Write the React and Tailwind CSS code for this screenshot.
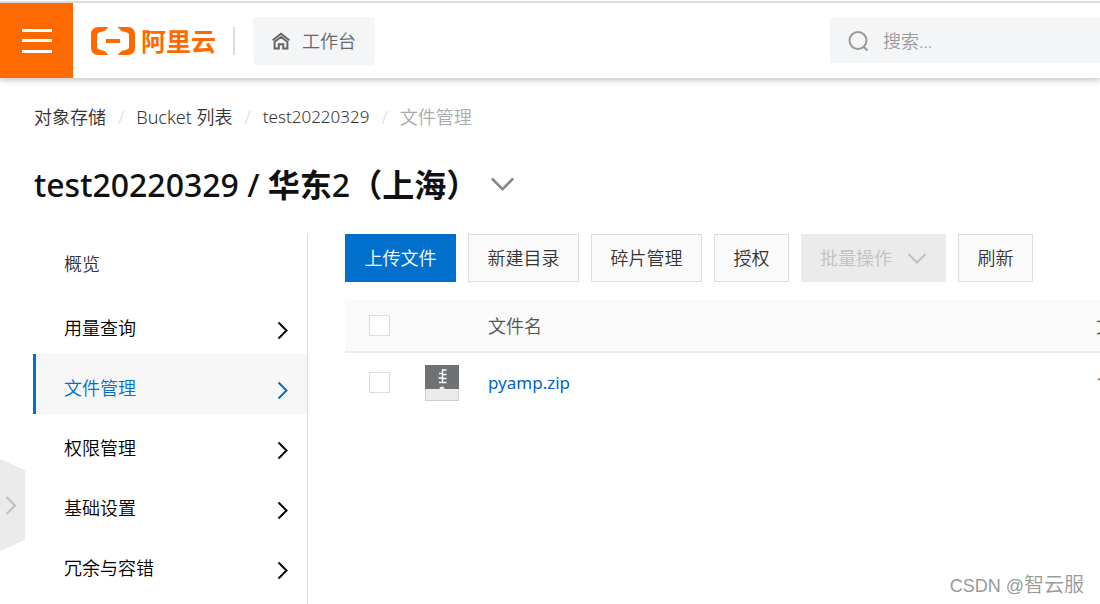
import clsx from 'clsx';

const crumbs = ['对象存储', 'Bucket 列表', 'test20220329'];

const menuItems = [
  { label: '用量查询' },
  { label: '文件管理', active: true },
  { label: '权限管理' },
  { label: '基础设置' },
  { label: '冗余与容错' },
];

const files = [{ name: 'pyamp.zip', size: '1' }];

function Chevron({ direction = 'right', className }) {
  const points = direction === 'right' ? '1.5,1.5 9.5,9.5 1.5,17.5' : '1.5,2 10,10.5 18.5,2';
  const viewBox = direction === 'right' ? '0 0 12 19' : '0 0 20 12';

  return (
    <svg viewBox={viewBox} className={className} fill="none" stroke="currentColor" strokeWidth="2" aria-hidden="true">
      <polyline points={points} />
    </svg>
  );
}

function Logo() {
  return (
    <a href="#home" className="ml-[18px] flex items-center gap-[6px] text-[#ff6a00]">
      <svg viewBox="0 0 44 28" className="h-7 w-11" fill="currentColor" aria-hidden="true">
        <path d="M17.500 0H7C3 0 0 3 0 7v14c0 4 3 7 7 7h10.500l-4-4-5.500-1.500c-1.300-.4-2-1.200-2-2.500V8c0-1.300.7-2.100 2-2.500L13.500 4z" />
        <path d="M26.500 0H37c4 0 7 3 7 7v14c0 4-3 7-7 7H26.500l4-4 5.500-1.500c1.300-.4 2-1.200 2-2.500V8c0-1.300-.7-2.100-2-2.500L30.500 4z" />
        <rect x="15" y="12" width="14" height="4" />
      </svg>
      <span className="text-[25px] leading-7 font-bold">阿里云</span>
    </a>
  );
}

function Header() {
  return (
    <header className="relative z-10 flex h-[78px] items-center border-t border-white bg-white shadow-[0_2px_6px_rgba(0,0,0,0.25)]">
      <div className="flex h-full w-full items-center border-t-2 border-[#dcdcdc]">
        <button type="button" aria-label="菜单" className="flex h-full w-[73px] shrink-0 items-center justify-center bg-[#ff6a00] text-white">
          <svg viewBox="0 0 30 24" className="h-6 w-[30px]" fill="currentColor" aria-hidden="true">
            <rect width="30" height="3" />
            <rect y="10" width="30" height="3" />
            <rect y="21" width="30" height="3" />
          </svg>
        </button>
        <Logo />
        <span className="ml-[17px] h-7 w-0.5 bg-[#dcdcdc]" />
        <button type="button" className="ml-[18px] flex h-12 shrink-0 items-center gap-3 rounded bg-[#f4f5f7] px-[19px] text-[#666]">
          <svg viewBox="0 0 18 18" className="h-[18px] w-[18px]" fill="none" stroke="currentColor" strokeWidth="2" aria-hidden="true">
            <path d="M.6 8.200L9 1.700l8.400 6.500" />
            <path d="M2.600 9.700L9 4.900l6.400 4.800v6.800h-4.200v-4.300H6.800v4.300H2.600z" />
          </svg>
          工作台
        </button>
        <label className="ml-auto flex h-[45px] w-[270px] items-center gap-[13px] bg-[#f4f5f7] pl-[18px] text-[#999]">
          <svg viewBox="0 0 22 22" className="h-[22px] w-[22px] shrink-0" fill="none" stroke="currentColor" strokeWidth="2" aria-hidden="true">
            <circle cx="10" cy="10.500" r="8.500" />
            <path d="M15.500 16.500l4 4" />
          </svg>
          <input
            type="search"
            placeholder="搜索..."
            aria-label="搜索"
            className="w-full min-w-0 bg-transparent outline-none placeholder:text-[#999]"
          />
        </label>
      </div>
    </header>
  );
}

function Sidebar() {
  return (
    <nav className="w-[275px] shrink-0 border-r border-[#dcdcdc]">
      <a href="#overview" className="flex h-[60px] items-center pl-[31px] text-[#333]">
        概览
      </a>
      {menuItems.map((item) => (
        <a
          key={item.label}
          href={`#${item.label}`}
          className={clsx(
            'flex h-[60px] items-center justify-between border-l-3 pt-2 pr-[18px] pl-7',
            item.active ? 'border-[#0070cc] bg-[#f7f7f7] text-[#0070cc]' : 'border-transparent text-black',
          )}
        >
          {item.label}
          <Chevron className="mt-1 h-[19px] w-3" />
        </a>
      ))}
    </nav>
  );
}

function ToolbarButton({ primary, small, disabled, children }) {
  return (
    <button
      type="button"
      disabled={disabled}
      className={clsx(
        'flex h-12 shrink-0 items-center justify-center border',
        small ? 'w-[75px]' : 'min-w-[111px]',
        primary && 'border-[#0070cc] bg-[#0070cc] text-white',
        disabled && 'gap-[15px] border-[#ebebeb] bg-[#ebebeb] px-[18px] text-[#c1c1c1]',
        !primary && !disabled && 'border-[#dcdcdc] bg-[#fafafa] text-[#333]',
      )}
    >
      {children}
    </button>
  );
}

function CheckBox({ label }) {
  return (
    <input
      type="checkbox"
      aria-label={label}
      className="block h-[21px] w-[21px] appearance-none border border-[#dcdcdc] bg-white checked:bg-[#0070cc]"
    />
  );
}

function ZipIcon() {
  return (
    <svg viewBox="0 0 34 36" className="h-9 w-[34px]" aria-hidden="true">
      <rect width="34" height="36" fill="#cfcfcf" />
      <rect x="1" y="24" width="32" height="11" fill="#ebebeb" />
      <rect width="34" height="24" fill="#6e7275" />
      <path d="M21.500 5H17.500v13M14 8.500h3.500M17.500 9.500h4M13.500 13h4M17.500 13.500h4M14 17.500h7.500" fill="none" stroke="#fff" strokeWidth="1.400" />
      <path d="M14.500 24a2.500 2.500 0 0 1 5 0z" fill="#ebebeb" />
    </svg>
  );
}

function FileTable() {
  return (
    <table className="mt-[18px] w-full min-w-[960px] table-fixed text-left">
      <thead>
        <tr className="h-[52px] border-b-2 border-[#ebebeb] bg-[#fafafa] text-[#555]">
          <th className="w-20 pl-6">
            <CheckBox label="全选" />
          </th>
          <th className="w-[63px]" />
          <th className="w-[608px] font-[350]">文件名</th>
          <th className="font-[350]">文件大小</th>
        </tr>
      </thead>
      <tbody>
        {files.map((file) => (
          <tr key={file.name} className="h-[60px] text-[#333]">
            <td className="pl-6">
              <CheckBox label={file.name} />
            </td>
            <td>
              <ZipIcon />
            </td>
            <td>
              <a href="#file" className="text-[17px] font-normal text-[#0064c8]">
                {file.name}
              </a>
            </td>
            <td>{file.size}</td>
          </tr>
        ))}
      </tbody>
    </table>
  );
}

export default function App() {
  return (
    <div className="relative flex min-h-screen flex-col overflow-hidden bg-white font-['Noto_Sans','Noto_Sans_CJK_SC',sans-serif] text-lg font-[350]">
      <Header />

      <div className="flex flex-1 flex-col pl-[33px]">
        <ol className="mt-[25px] flex h-7 items-center pl-px text-[#333]">
          {crumbs.map((crumb) => (
            <li key={crumb} className="flex items-center">
              <a href="#crumb" className={clsx(crumb.startsWith('test') && 'text-[17px]')}>
                {crumb}
              </a>
              <span className="px-3 text-[#dcdcdc]">/</span>
            </li>
          ))}
          <li className="text-[#aaa]">文件管理</li>
        </ol>

        <div className="mt-[31px] mb-[26px] flex h-[46px] items-center gap-3 pl-px text-[#111]">
          <h1 className="text-[32px] leading-[46px] font-medium">
            test20220329 / <span className="font-bold">华东</span>2<span className="font-bold">（上海）</span>
          </h1>
          <button type="button" aria-label="切换" className="pb-1 text-[#888]">
            <Chevron direction="down" className="h-[15px] w-[25px]" />
          </button>
        </div>

        <div className="flex flex-1">
          <Sidebar />
          <main className="ml-[37px] min-w-0 flex-1 overflow-hidden">
            <div className="flex gap-3">
              <ToolbarButton primary>上传文件</ToolbarButton>
              <ToolbarButton>新建目录</ToolbarButton>
              <ToolbarButton>碎片管理</ToolbarButton>
              <ToolbarButton small>授权</ToolbarButton>
              <ToolbarButton disabled>
                批量操作
                <Chevron direction="down" className="h-3 w-5" />
              </ToolbarButton>
              <ToolbarButton small>刷新</ToolbarButton>
            </div>
            <FileTable />
          </main>
        </div>
      </div>

      <button type="button" aria-label="展开" className="absolute top-[459px] left-0 text-[#c1c1c1]">
        <svg viewBox="0 0 25 92" className="h-[92px] w-[25px]" aria-hidden="true">
          <path d="M0 0l25 11v70L0 92z" fill="#ebebeb" />
          <path d="M6.500 38l8.500 8.500L6.500 55" fill="none" stroke="currentColor" strokeWidth="2.200" />
        </svg>
      </button>

      <span className="absolute right-4 bottom-1 font-['Liberation_Sans','Noto_Sans_CJK_SC',sans-serif] text-lg text-[#999]">
        CSDN @<span className="text-xl">智云服</span>
      </span>
    </div>
  );
}
